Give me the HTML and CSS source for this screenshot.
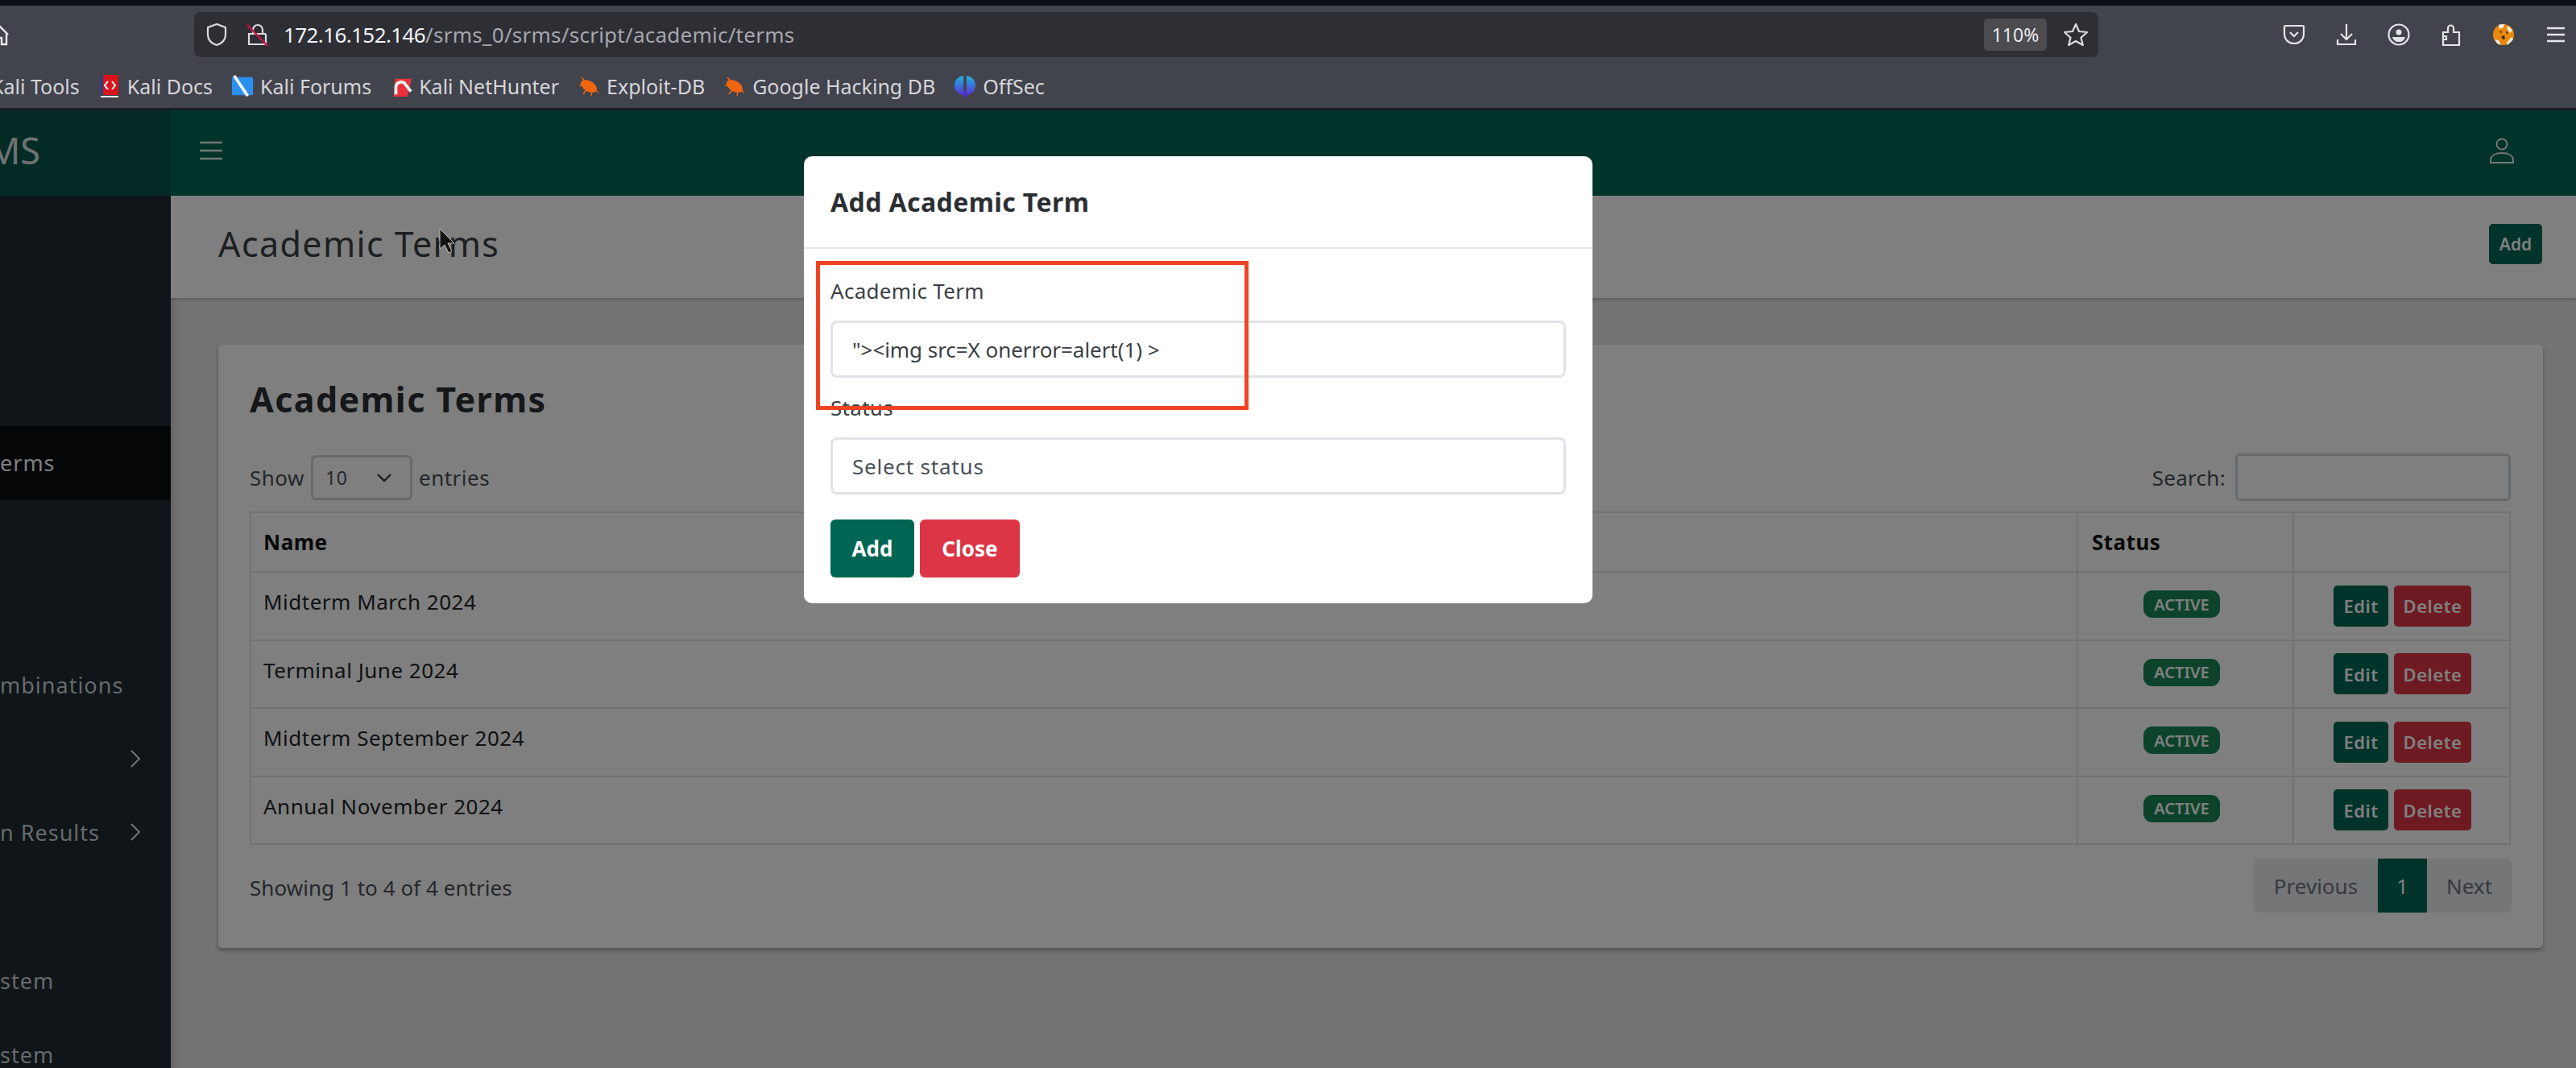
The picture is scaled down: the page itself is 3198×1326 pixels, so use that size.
FILE: index.html
```html
<!DOCTYPE html>
<html lang="en">
<head>
<meta charset="utf-8">
<title>Academic Terms</title>
<link rel="stylesheet" href="styles.css">
</head>
<body>
<div class="strip"></div>
<header class="toolbar">
  <div class="tool-row">
    <svg class="home" viewBox="0 0 24 28"><path d="M1 14 12 3l11 11M4 12v14h6v-8h5v8h6V12" fill="none" stroke="#e8e8ec" stroke-width="2.4"/></svg>
    <div class="urlbar">
      <svg class="ic-shield" viewBox="0 0 28 30"><path d="M14 2 3 6v9c0 7 5 11 11 13 6-2 11-6 11-13V6z" fill="none" stroke="#dcdce0" stroke-width="2.2"/></svg>
      <svg class="ic-lock" viewBox="0 0 28 30"><path d="M8 13V9a6 6 0 0 1 12 0v4M3 14h20a1 1 0 0 1 1 1v11a1 1 0 0 1-1 1H3z" fill="none" stroke="#dcdce0" stroke-width="2.2"/><path d="M1 3l25 26" stroke="#d0123f" stroke-width="2.4"/></svg>
      <span class="url"><b class="host">172.16.152.146</b><span class="path">/srms_0/srms/script/academic/terms</span></span>
      <span class="zoom-badge">110%</span>
      <svg class="ic-star" viewBox="0 0 30 30"><path d="M15 2l4 9 10 1-7.500 6.800L23.800 28 15 23l-8.800 5 2.300-9.200L1 12l10-1z" fill="none" stroke="#dcdce0" stroke-width="2.2" stroke-linejoin="round"/></svg>
    </div>
    <div class="tools">
      <svg viewBox="0 0 28 28"><path d="M3 3h22a1 1 0 0 1 1 1v9c0 7-5 12-12 12S2 20 2 13V4a1 1 0 0 1 1-1z" fill="none" stroke="#e4e4e8" stroke-width="2.2"/><path d="M9 11l5 5 5-5" fill="none" stroke="#e4e4e8" stroke-width="2.2"/></svg>
      <svg viewBox="0 0 28 28"><path d="M14 1v19M7 13l7 7 7-7M3 20v6h22v-6" fill="none" stroke="#e4e4e8" stroke-width="2.2"/></svg>
      <svg viewBox="0 0 28 28"><circle cx="14" cy="14" r="12.500" fill="none" stroke="#e4e4e8" stroke-width="2.2"/><circle cx="14" cy="11" r="3.500" fill="#e4e4e8"/><path d="M6 17h16c-1 4-4 6-8 6s-7-2-8-6z" fill="#e4e4e8"/></svg>
      <svg viewBox="0 0 28 28"><path d="M4 27V11h6V6a3.500 3.500 0 0 1 7 0v5h7v16zM4 20h4v-4H4" fill="none" stroke="#e4e4e8" stroke-width="2.2"/></svg>
      <svg viewBox="0 0 28 28"><circle cx="14" cy="14" r="13" fill="#ea8a0a"/><path d="M8 1.500l7-.500-1 4-5 2zM20 3l5 6-3 3-4-6zM24 17l2 3-7 7-1-3zM3 20l5 1 3 6-5-2z" fill="#efece6"/><path d="M9 9l3 1-1 3zM17 10l3 1-2 3zM11 16l4-1 1 4-3 1z" fill="#3a2a14"/></svg>
      <svg viewBox="0 0 28 28"><path d="M3 6h22M3 14h22M3 22h22" stroke="#e4e4e8" stroke-width="2.600"/></svg>
    </div>
  </div>
  <nav class="bookmarks">
    <span class="bm bm-first">Kali Tools</span>
    <span class="bm"><svg viewBox="0 0 24 30"><rect x="1" y="1" width="22" height="25" fill="#d8141c"/><rect x="1" y="1" width="3" height="25" fill="#24408e"/><rect x="1" y="27" width="22" height="2" fill="#e8e8e8"/><path d="M10 9l-4 5 4 5M15 9l4 5-4 5" fill="none" stroke="#fff" stroke-width="2"/></svg>Kali Docs</span>
    <span class="bm"><svg viewBox="0 0 30 30"><rect x="1" y="3" width="28" height="24" rx="2" fill="#2b8ff2"/><path d="M4 1l18 27" stroke="#f2f2f2" stroke-width="4"/></svg>Kali Forums</span>
    <span class="bm"><svg viewBox="0 0 30 30"><path d="M7 5h22l-6 24H5z" fill="#e8323c"/><path d="M8 26V16a7 7 0 0 1 13-3l7 9" fill="none" stroke="#f2f2f2" stroke-width="4"/></svg>Kali NetHunter</span>
    <span class="bm"><svg viewBox="0 0 28 30"><use href="#bug"/></svg>Exploit-DB</span>
    <span class="bm"><svg viewBox="0 0 28 30"><use href="#bug"/></svg>Google Hacking DB</span>
    <span class="bm"><svg viewBox="0 0 28 30"><defs><linearGradient id="os" x1="0" y1="0" x2="0" y2="1"><stop offset="0" stop-color="#1fb6d8"/><stop offset="1" stop-color="#5a2be0"/></linearGradient></defs><path d="M12 2C5 3 1 8 1 14s4 10 11 13zM16 2c7 1 11 6 11 12s-4 10-11 13z" fill="url(#os)"/><rect x="13" y="20" width="2" height="9" fill="#5a2be0"/></svg>OffSec</span>
    <svg class="defs" viewBox="0 0 28 30"><g id="bug"><ellipse cx="14" cy="15" rx="11" ry="6.500" transform="rotate(30 14 15)" fill="#f0660f"/><path d="M5 4l5 6M2 14h7M7 25l4-6M17 27l1-6M26 23l-6-4" stroke="#f0660f" stroke-width="1.500"/></g></svg>
  </nav>
</header>

<div class="app">
  <aside class="sidebar">
    <div class="brand"><span class="brand-text">MS</span></div>
    <ul class="menu">
      <li class="item"></li>
      <li class="item"></li>
      <li class="item"></li>
      <li class="item active"><span>erms</span></li>
      <li class="item"></li>
      <li class="item"></li>
      <li class="item"><span>mbinations</span></li>
      <li class="item has-sub"><svg class="chev" viewBox="0 0 14 24"><path d="M2 2l10 10L2 22" fill="none" stroke="#fff" stroke-width="1.800"/></svg></li>
      <li class="item has-sub"><span>n Results</span><svg class="chev" viewBox="0 0 14 24"><path d="M2 2l10 10L2 22" fill="none" stroke="#fff" stroke-width="1.800"/></svg></li>
      <li class="item"></li>
      <li class="item"><span>stem</span></li>
      <li class="item"><span>stem</span></li>
    </ul>
  </aside>
  <main class="main">
    <div class="topbar">
      <svg class="burger" viewBox="0 0 28 24"><path d="M0 2h28M0 12h28M0 22h28" stroke="#fff" stroke-width="2.600"/></svg>
      <svg class="person" viewBox="0 0 32 32"><circle cx="16" cy="8" r="6.500" fill="none" stroke="#fff" stroke-width="2"/><path d="M2 31v-3c0-6 6-9 14-9s14 3 14 9v3z" fill="none" stroke="#fff" stroke-width="2"/></svg>
    </div>
    <div class="page-head">
      <h1 class="page-title">Academic Terms</h1>
      <button class="btn btn-head">Add</button>
    </div>
    <section class="card">
      <h2 class="card-title">Academic Terms</h2>
      <div class="controls">
        <label class="length">Show
          <span class="fake-select">10<svg viewBox="0 0 20 12"><path d="M2 2l8 8 8-8" fill="none" stroke="#343a40" stroke-width="2.400"/></svg></span>
          entries</label>
        <label class="search">Search:<span class="search-box"></span></label>
      </div>
      <table class="table">
        <colgroup><col class="c1"><col class="c2"><col class="c3"></colgroup>
        <thead><tr><th>Name</th><th>Status</th><th></th></tr></thead>
        <tbody>
          <tr><td>Midterm March 2024</td><td class="center"><span class="badge">ACTIVE</span></td><td class="center"><span class="acts"><button class="btn-s edit">Edit</button><button class="btn-s del">Delete</button></span></td></tr>
          <tr><td>Terminal June 2024</td><td class="center"><span class="badge">ACTIVE</span></td><td class="center"><span class="acts"><button class="btn-s edit">Edit</button><button class="btn-s del">Delete</button></span></td></tr>
          <tr><td>Midterm September 2024</td><td class="center"><span class="badge">ACTIVE</span></td><td class="center"><span class="acts"><button class="btn-s edit">Edit</button><button class="btn-s del">Delete</button></span></td></tr>
          <tr><td>Annual November 2024</td><td class="center"><span class="badge">ACTIVE</span></td><td class="center"><span class="acts"><button class="btn-s edit">Edit</button><button class="btn-s del">Delete</button></span></td></tr>
        </tbody>
      </table>
      <div class="foot">
        <span class="foot-info">Showing 1 to 4 of 4 entries</span>
        <div class="pager"><span class="pg pg-prev">Previous</span><span class="pg pg-cur">1</span><span class="pg pg-next">Next</span></div>
      </div>
    </section>
  </main>
</div>

<div class="backdrop"></div>
<svg class="cursor" viewBox="0 0 20 32"><path d="M1 1v25l6-5 5 10 4-2-5-10h8z" fill="#111" stroke="#bbb" stroke-width="1"/></svg>

<div class="modal">
  <div class="modal-head"><h3 class="modal-title">Add Academic Term</h3></div>
  <div class="modal-body">
    <label class="f-label">Academic Term</label>
    <div class="f-input f-dark">"&gt;&lt;img src=X onerror=alert(1) &gt;</div>
    <label class="f-label f-status">Status</label>
    <div class="f-input f-select">Select status</div>
    <div class="modal-btns"><button class="m-btn m-add">Add</button><button class="m-btn m-close">Close</button></div>
  </div>
</div>
<div class="annotation"></div>
</body>
</html>
```

FILE: styles.css
```css
* { box-sizing: border-box; }
html, body { margin: 0; padding: 0; height: 100%; overflow: hidden; }
body { width: 3198px; height: 1326px; position: relative; font-family: "Noto Sans", sans-serif; background: #e6e6e6; color: #212529; display: flex; flex-direction: column; }

.strip { height: 7px; background: #0c0e14; flex: none; }
.toolbar { height: 130px; flex: none; background: #42444d; border-bottom: 3px solid #1b1d21; color: #e8e8ec; overflow: hidden; }
.tool-row { height: 72px; padding-top: 8px; display: flex; align-items: flex-start; }
.home { width: 24px; height: 28px; margin: 14px 0 0 -13px; flex: none; }
.urlbar { margin-left: 230px; width: 2364px; height: 56px; background: #2e2f35; border-radius: 8px; display: flex; align-items: center; flex: none; }
.ic-shield { width: 28px; height: 30px; margin-left: 14px; flex: none; }
.ic-lock { width: 28px; height: 30px; margin-left: 23px; flex: none; }
.url { margin-left: 18px; font-size: 26px; white-space: nowrap; flex: 1; }
.host { font-weight: 400; color: #f4f4f8; letter-spacing: -.6px; }
.path { color: #a6a6ae; letter-spacing: .25px; }
.zoom-badge { width: 78px; height: 40px; border-radius: 5px; background: #4b4b50; color: #e8e8ec; font-size: 23px; display: flex; align-items: center; justify-content: center; margin-right: 21px; flex: none; }
.ic-star { width: 30px; height: 30px; margin-right: 13px; flex: none; }
.tools { margin-left: 229px; display: flex; gap: 37px; align-items: center; height: 56px; flex: none; }
.tools svg { width: 28px; height: 28px; flex: none; }

.bookmarks { height: 54px; display: flex; align-items: center; gap: 23px; margin-left: -11px; padding-top: 2px; font-size: 25px; color: #d6d6da; white-space: nowrap; }
.bm { display: flex; align-items: center; gap: 8px; flex: none; }
.bm svg { width: 28px; height: 30px; flex: none; }
.bookmarks .defs { width: 0; height: 0; }

.app { flex: 1; display: flex; min-height: 0; }
.sidebar { width: 212px; flex: none; background: #1f2a32; color: #fff; display: flex; flex-direction: column; overflow: hidden; }
.brand { height: 106px; flex: none; background: #06554a; display: flex; align-items: center; justify-content: flex-end; padding: 0 162px 8px 0; font-size: 45px; color: #fff; }
.brand-text { opacity: .85; }
.menu { list-style: none; margin: 0; padding: 11px 0 0; display: grid; grid-auto-rows: 91.800px; }
.item { display: flex; align-items: center; position: relative; font-size: 27px; line-height: 30px; letter-spacing: 1px; color: #cfd3d6; white-space: nowrap; }
.item.active { background: #080c10; color: #fff; }
.chev { width: 14px; height: 26px; flex: none; position: absolute; left: 161px; top: 32px; opacity: .95; }

.main { flex: 1; min-width: 0; display: flex; flex-direction: column; background: #e6e6e6; box-shadow: inset 12px 0 12px -12px rgba(0,0,0,.25); }
.topbar { height: 106px; flex: none; background: #006653; display: flex; align-items: center; justify-content: space-between; padding: 0 76px 6px 36px; }
.burger { width: 28px; height: 24px; opacity: .9; }
.person { width: 32px; height: 32px; opacity: .9; }
.page-head { height: 127px; flex: none; background: #fff; display: flex; align-items: center; justify-content: space-between; padding: 0 42px 8px 59px; box-shadow: 0 2px 4px rgba(0,0,0,.2); }
.page-title { margin: 0; font-size: 43px; font-weight: 400; letter-spacing: 1.400px; color: #3b4045; }
.btn-head { width: 66px; height: 50px; border: 0; border-radius: 5px; background: #006653; color: #fff; font: 600 21px "Noto Sans", sans-serif; padding: 0; }

.card { margin: 58px 41px 0 59px; height: 749px; background: #fff; border-radius: 5px; box-shadow: 0 3px 5px rgba(0,0,0,.3); padding: 39px 39px 0; flex: none; }
.card-title { margin: 0; font-size: 43px; font-weight: 700; line-height: 58px; letter-spacing: 1.400px; color: #2a2e32; }
.controls { margin-top: 38px; height: 59px; margin-bottom: 1px; display: flex; justify-content: space-between; align-items: center; font-size: 26px; color: #495057; }
.length { display: flex; align-items: center; gap: 8px; letter-spacing: .5px; }
.fake-select { width: 126px; height: 56px; border: 3px solid #ced4da; border-radius: 6px; padding: 0 22px 0 15px; display: flex; align-items: center; justify-content: space-between; font-size: 23px; color: #495057; }
.fake-select svg { width: 20px; height: 12px; }
.search { display: flex; align-items: center; gap: 12px; letter-spacing: .3px; margin-right: 1px; }
.search-box { width: 342px; height: 59px; border: 3px solid #ced4da; border-radius: 6px; display: block; }

.table { margin-top: 13px; width: 2807px; border-collapse: collapse; table-layout: fixed; font-size: 26px; letter-spacing: .5px; }
.c2 { width: 268px; }
.c3 { width: 269px; }
.table th, .table td { border: 2px solid #dee2e6; padding: 0 17px; text-align: left; }
.table th { height: 74px; font-weight: 700; font-size: 26px; color: #111; }
.table th:first-child, .table td:first-child { padding-left: 15px; }
.table td { height: 84.500px; padding-bottom: 10px; color: #212529; }
.table td.center { text-align: center; padding: 0 9px 0 0; }
.badge { display: inline-flex; align-items: center; justify-content: center; width: 95px; height: 34px; border-radius: 11px; background: #198754; color: #fff; font-size: 20px; font-weight: 600; letter-spacing: 0; position: relative; top: -4px; }
.table td:last-child.center { padding: 0 0 0 2px; }
.acts { display: inline-flex; gap: 7px; vertical-align: middle; }
.btn-s { height: 51px; border: 0; border-radius: 5px; padding: 0; color: #fff; font: 600 22px "Noto Sans", sans-serif; letter-spacing: .5px; }
.edit { width: 68px; background: #006653; }
.del { width: 96px; background: #dc3545; }

.foot { margin-top: 17px; display: flex; justify-content: space-between; align-items: center; font-size: 26px; color: #495057; height: 67px; }
.foot-info { letter-spacing: .05px; padding-top: 5px; }
.pager { display: flex; height: 67px; border-radius: 7px; overflow: hidden; background: #e9ecef; color: #6c757d; font-size: 26px; }
.pg { display: flex; align-items: center; justify-content: center; }
.pg-prev { width: 154px; }
.pg-cur { width: 61px; background: #006653; color: #fff; }
.pg-next { width: 105px; }

.backdrop { position: absolute; left: 0; right: 0; top: 137px; bottom: 0; background: rgba(0,0,0,.5); }
.cursor { position: absolute; left: 545px; top: 283px; width: 20px; height: 32px; }

.modal { position: absolute; left: 998px; top: 194px; width: 979px; height: 555px; background: #fff; border-radius: 10px; display: flex; flex-direction: column; }
.modal-head { height: 115px; flex: none; border-bottom: 2px solid #e4e8ec; padding: 0 33px; display: flex; align-items: center; }
.modal-title { margin: 0; font-size: 32px; font-weight: 700; color: #2b2f33; letter-spacing: .4px; }
.modal-body { padding: 0 33px; display: flex; flex-direction: column; }
.f-label { display: block; font-size: 26px; line-height: 36px; margin-top: 34px; color: #3a3f44; letter-spacing: .3px; }
.f-status { margin-top: 19px; }
.f-input { height: 71px; margin-top: 19px; border: 3px solid #dfe3e8; border-radius: 8px; padding: 0 24px; display: flex; align-items: center; font-size: 26px; color: #495057; letter-spacing: -.05px; }
.f-dark { color: #3a3f44; }
.f-select { letter-spacing: .8px; }
.modal-btns { display: flex; gap: 7px; margin-top: 31px; }
.m-btn { height: 72px; border: 0; border-radius: 6px; color: #fff; font: 700 26px "Noto Sans", sans-serif; padding: 0; }
.m-add { width: 104px; background: #006653; }
.m-close { width: 124px; background: #dc3545; }

.annotation { position: absolute; left: 1013px; top: 324px; width: 537px; height: 185px; border: 5px solid #ee4323; }
```
